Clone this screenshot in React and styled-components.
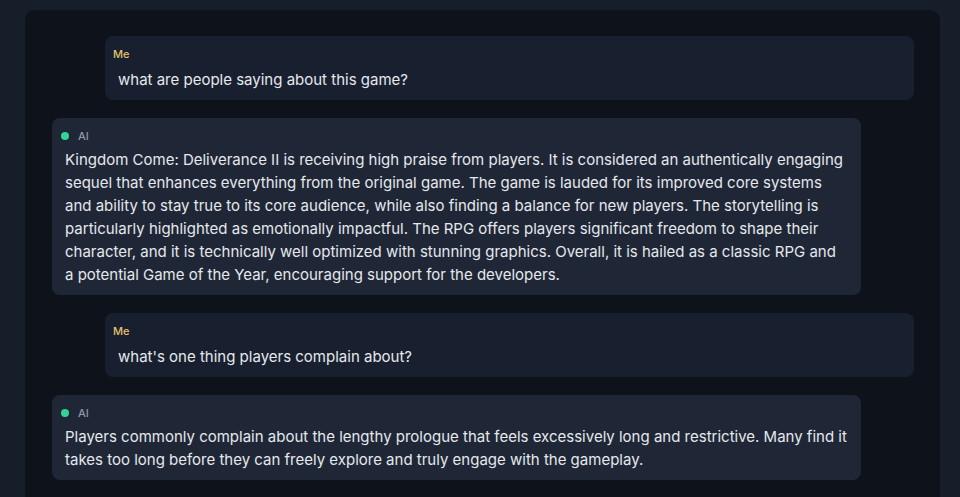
import React from "react";
import styled, { createGlobalStyle } from "styled-components";

const GlobalStyle = createGlobalStyle`
  html, body {
    margin: 0;
    padding: 0;
    background: #161e2a;
    height: 100%;
    overflow: hidden;
  }
  body {
    font-family: Inter, "Noto Sans", "Liberation Sans", sans-serif;
  }
  #root {
    height: 100%;
  }
`;

const Page = styled.div`
  height: 100%;
  padding: 10px 20px 0 25px;
  box-sizing: border-box;
  display: flex;
  flex-direction: column;
  overflow: hidden;
`;

const Panel = styled.div`
  flex: 1;
  background: #0e131b;
  border-radius: 10px 10px 0 0;
  padding: 26px 26px 0 27px;
  box-sizing: border-box;
  display: flex;
  flex-direction: column;
  gap: 18px;
  overflow: hidden;
`;

const Bubble = styled.div`
  width: 809px;
  flex: none;
  box-sizing: border-box;
  align-self: ${(p) => (p.$mine ? "flex-end" : "flex-start")};
  background: ${(p) => (p.$mine ? "#182030" : "#1f2737")};
  border-radius: 8px;
  padding: 10px 8px 9px;
  display: flex;
  flex-direction: column;
  gap: ${(p) => (p.$mine ? "6px" : "4px")};
`;

const LabelRow = styled.div`
  display: flex;
  align-items: center;
  gap: 9px;
  height: 16px;
  padding-left: ${(p) => (p.$mine ? "0" : "1px")};
`;

const Dot = styled.span`
  width: 8px;
  height: 8px;
  border-radius: 50%;
  background: #34d399;
  flex: none;
`;

const Label = styled.span`
  font-size: 11px;
  line-height: 16px;
  font-weight: 500;
  color: ${(p) => (p.$mine ? "#e3c06a" : "#8f97a5")};
`;

const Text = styled.div`
  padding: 0 5px;
  font-size: 15px;
  line-height: 23px;
  color: #e6e8ec;
`;

const messages = [
  { mine: true, text: "what are people saying about this game?" },
  {
    mine: false,
    text:
      "Kingdom Come: Deliverance II is receiving high praise from players. It is considered an authentically engaging sequel that enhances everything from the original game. The game is lauded for its improved core systems and ability to stay true to its core audience, while also finding a balance for new players. The storytelling is particularly highlighted as emotionally impactful. The RPG offers players significant freedom to shape their character, and it is technically well optimized with stunning graphics. Overall, it is hailed as a classic RPG and a potential Game of the Year, encouraging support for the developers.",
  },
  { mine: true, text: "what's one thing players complain about?" },
  {
    mine: false,
    text:
      "Players commonly complain about the lengthy prologue that feels excessively long and restrictive. Many find it takes too long before they can freely explore and truly engage with the gameplay.",
  },
];

export default function App() {
  return (
    <>
      <GlobalStyle />
      <Page>
        <Panel>
          {messages.map((m, i) => (
            <Bubble key={i} $mine={m.mine}>
              <LabelRow $mine={m.mine}>
                {!m.mine && <Dot />}
                <Label $mine={m.mine}>{m.mine ? "Me" : "AI"}</Label>
              </LabelRow>
              <Text>{m.text}</Text>
            </Bubble>
          ))}
        </Panel>
      </Page>
    </>
  );
}
